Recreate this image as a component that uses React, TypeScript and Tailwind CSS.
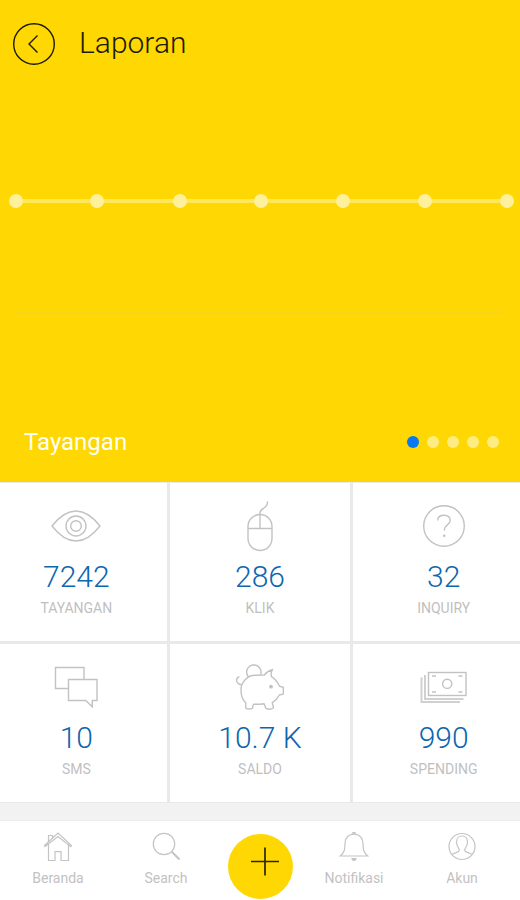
import React, { useState } from 'react';

type Stat = { label: string; value: string; icon: React.ReactNode };

const stats: Stat[] = [
  { label: 'TAYANGAN', value: '7242', icon: <EyeIcon /> },
  { label: 'KLIK', value: '286', icon: <MouseIcon /> },
  { label: 'INQUIRY', value: '32', icon: <QuestionIcon /> },
  { label: 'SMS', value: '10', icon: <ChatIcon /> },
  { label: 'SALDO', value: '10.7 K', icon: <PiggyIcon /> },
  { label: 'SPENDING', value: '990', icon: <CashIcon /> },
];

const chartPoints = [16, 97, 180, 261, 343, 425, 507];

const slides = ['Tayangan', 'Klik', 'Inquiry', 'SMS', 'Saldo'];

function StatSvg({ children }: { children: React.ReactNode }) {
  return (
    <svg viewBox="0 0 54 54" className="size-[54px]" fill="none" stroke="#c2c2c2" strokeWidth="1.4" aria-hidden="true">
      {children}
    </svg>
  );
}

function NavSvg({ children }: { children: React.ReactNode }) {
  return (
    <svg viewBox="0 0 30 30" className="size-[30px]" fill="none" stroke="#c4c4c4" strokeWidth="1.2" aria-hidden="true">
      {children}
    </svg>
  );
}

function EyeIcon() {
  return (
    <StatSvg>
      <path d="M3 27C10 18 18 12 27 12s17 6 24 15c-7 9-15 15-24 15S10 36 3 27z" />
      <circle cx="27" cy="27" r="10" />
      <circle cx="27" cy="27" r="5.3" />
    </StatSvg>
  );
}

function MouseIcon() {
  return (
    <StatSvg>
      <rect x="15" y="15.5" width="24" height="36" rx="12" />
      <path d="M15 29.5h24M27 29.5V14c0-3 1.5-3.6 4-5s3.5-3 3.5-6.5" />
    </StatSvg>
  );
}

function QuestionIcon() {
  return (
    <StatSvg>
      <circle cx="27" cy="27" r="20.3" />
      <path d="M20.7 21.5c0-3.2 2.5-5.2 6.3-5.2s6.2 2.2 6.2 5.3c0 3.8-5.9 4.3-5.9 9.9" />
      <circle cx="27.2" cy="36.7" r="1.3" fill="#c2c2c2" stroke="none" />
    </StatSvg>
  );
}

function ChatIcon() {
  return (
    <StatSvg>
      <path d="M19 28.5H6.5v-21H35v12" />
      <path d="M19.5 19.5H48v21h-4.7v6.3l-6.6-6.3H19.5z" />
    </StatSvg>
  );
}

function PiggyIcon() {
  return (
    <StatSvg>
      <path d="M15.5 17a7.2 7.2 0 1 1 12-2.2" />
      <path d="M6.3 16.7c-3 .8-3.4 4-1.9 6 1.3 1.6 3 2 4.6 2" />
      <path d="M8 30c0-8.5 7-14.7 14-14.7 3.5 0 6-.2 9.3-.3 2.2-2.8 4.9-4.6 8-5.3-1.2 2.5-1.6 4.7-.8 7 3.7 2.4 6.3 5.8 7.8 9.3.8 1 2.7.4 4 1.3v6.7c-1.2.8-3 .2-4 1-1.5 3.3-4 5.7-7 7.7 0 2.3 1.5 3 1 5.3-2 1.3-5.5 1.2-7.3.3-1-1.3-1-3.3-2-4.6-3.5.6-6.8.6-10.3.6-1.2 1.2-.6 2.8-1.4 4-2 .9-4.5.9-6.3 0-1-2 .3-3.8-.3-5.6C9.5 39.8 8 34.8 8 30z" />
      <circle cx="38" cy="26.7" r="1.9" fill="#c2c2c2" stroke="none" />
    </StatSvg>
  );
}

function CashIcon() {
  return (
    <StatSvg>
      <path d="M4.5 17.5V42H43M8 15v24h38.5" strokeWidth="2" stroke="#d0d0d0" />
      <rect x="11.5" y="12.5" width="37.5" height="23" />
      <circle cx="30.2" cy="23.8" r="4.6" />
      <path d="M15 16h4M41.5 16h4M15 32h4M41.5 32h4" />
    </StatSvg>
  );
}

function HomeIcon() {
  return (
    <NavSvg>
      <path d="M2 14.5l-.5-1L15 1l13.5 12.5-.8 1.2L15 4.5z" />
      <path d="M5.5 12v16.5H12v-8.8h6v8.8h7.5V12M5.5 9.5v-6h4V6" />
    </NavSvg>
  );
}

function SearchIcon() {
  return (
    <NavSvg>
      <circle cx="13" cy="12" r="10.7" />
      <path d="M20.5 19.5l8 8" strokeWidth="2" />
    </NavSvg>
  );
}

function BellIcon() {
  return (
    <NavSvg>
      <path d="M15 2.2C9.5 2.2 6 6 6 11c0 6-.2 9-4.8 13h27.6C24.2 20 24 17 24 11c0-5-3.5-8.8-9-8.8z" />
      <path d="M13.2 1.5c.4-1.2 3.2-1.2 3.6 0M12.8 26c.5 3.2 3.9 3.2 4.4 0" fill="#c4c4c4" />
    </NavSvg>
  );
}

function UserIcon() {
  return (
    <NavSvg>
      <circle cx="15" cy="14.5" r="13" />
      <path d="M5 22.5c1.5-2 6.5-1.5 7.3-4 .5-2-2.8-3.7-2.8-8.500 0-3.8 2.3-6 5.5-6s5.5 2.2 5.5 6c0 4.8-3.3 6.5-2.8 8.5.8 2.5 5.8 2 7.3 4" />
    </NavSvg>
  );
}

function StatCell({ label, value, icon }: Stat) {
  return (
    <div className="flex flex-col items-center bg-white pt-4 pb-[23px]">
      {icon}
      <div className="mt-1.5 text-[30px] leading-9 font-light text-[#0c66b0]">{value}</div>
      <div className="mt-[3px] text-sm text-[#bfbfbf]">{label}</div>
    </div>
  );
}

function NavItem({ label, children }: { label: string; children: React.ReactNode }) {
  return (
    <a href="#" className="flex flex-col items-center pt-[11px] text-sm text-[#c2c2c2]">
      {children}
      <span className="mt-1.5">{label}</span>
    </a>
  );
}

export default function App() {
  const [slide, setSlide] = useState(0);

  return (
    <div className="min-h-screen overflow-hidden bg-[#f2f2f2] font-['Roboto',sans-serif]">
      <section className="bg-[#ffd803]">
        <header className="flex items-center gap-6 px-[13px] pt-[23px]">
          <button type="button" aria-label="Kembali" className="size-[42px] shrink-0">
            <svg viewBox="0 0 42 42" className="size-full" fill="none" stroke="#1c1a00" strokeWidth="1.4">
              <circle cx="21" cy="21" r="20.3" />
              <path d="M24.5 12.5L16 21l8.5 8.5" />
            </svg>
          </button>
          <h1 className="pb-0.5 text-[30px] leading-10 font-light text-[#1c1a00]">Laporan</h1>
        </header>

        {/* Weekly chart */}
        <svg viewBox="0 0 520 345" className="block w-full" aria-hidden="true">
          <path d="M16 136H507" stroke="#ffe759" strokeWidth="4" />
          {chartPoints.map((x) => (
            <circle key={x} cx={x} cy="136" r="7" fill="#fff09b" />
          ))}
          <path d="M16 247.5H504" stroke="#f8d31c" strokeWidth="1" />
        </svg>

        <div className="flex items-center justify-between pr-[21px] pb-2 pl-6">
          <h2 className="text-2xl leading-[64px] text-[#fffef5]">{slides[slide]}</h2>
          <div className="flex gap-2">
            {slides.map((name, i) => (
              <button
                key={name}
                type="button"
                aria-label={name}
                onClick={() => setSlide(i)}
                className={`size-3 rounded-full ${i === slide ? 'bg-[#0a78f0]' : 'bg-[#ffec80]'}`}
              />
            ))}
          </div>
        </div>
      </section>

      {/* Outer columns run past the screen edge */}
      <div className="-mx-3.5 grid grid-cols-3 gap-[3px] border-y border-[#e9e9e9] bg-[#e9e9e9]">
        {stats.map((stat) => (
          <StatCell key={stat.label} {...stat} />
        ))}
      </div>

      <nav className="mt-[17px] grid grid-cols-[1fr_1fr_80px_1fr_1fr] border-t border-[#ececec] bg-white px-1">
        <NavItem label="Beranda"><HomeIcon /></NavItem>
        <NavItem label="Search"><SearchIcon /></NavItem>
        <button type="button" aria-label="Tambah" className="mx-auto mt-[13px] mb-px size-[65px] rounded-full bg-[#ffd803]">
          <svg viewBox="0 0 65 65" className="size-full" fill="none" stroke="#2a2500" strokeWidth="1.7">
            <path d="M23 27.5h28M37 13.5v28" />
          </svg>
        </button>
        <NavItem label="Notifikasi"><BellIcon /></NavItem>
        <NavItem label="Akun"><UserIcon /></NavItem>
      </nav>
    </div>
  );
}
